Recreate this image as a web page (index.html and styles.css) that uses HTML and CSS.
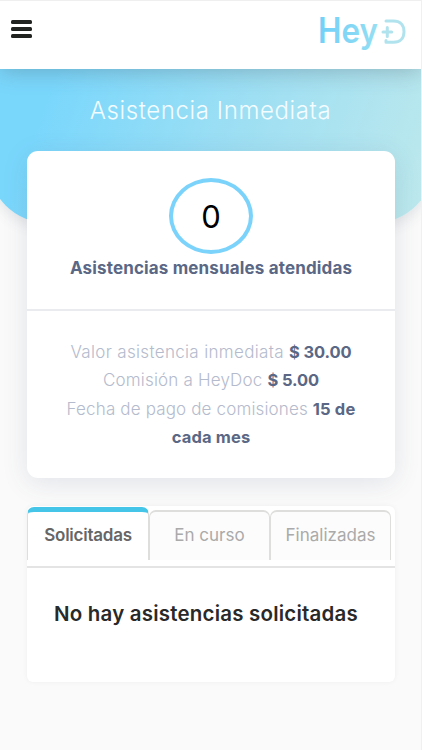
FILE: index.html
```html
<!DOCTYPE html>
<html lang="es">
<head>
<meta charset="utf-8">
<meta name="viewport" content="width=device-width, initial-scale=1">
<title>HeyDoc</title>
<link rel="stylesheet" href="styles.css">
</head>
<body>
<header class="topbar">
  <button class="menu" aria-label="Menú"><span></span><span></span><span></span></button>
  <svg class="logo" width="90" height="50" viewBox="0 0 90 50" aria-label="Hey D">
    <defs><linearGradient id="brand" gradientUnits="userSpaceOnUse" x1="0" y1="0" x2="90" y2="0"><stop stop-color="#72d0f8"/><stop offset=".55" stop-color="#8edcf4"/><stop offset="1" stop-color="#bce6ea"/></linearGradient></defs>
    <text class="logo-text" x="-1" y="30.500" textLength="60" lengthAdjust="spacingAndGlyphs">Hey</text>
    <path class="logo-mark" d="M67 9H74.500C81 9 85 13 85 19.700S81 30.300 74.500 30.300H67V28.500M64 20H72.700M68.300 15.600V24.400"/>
  </svg>
</header>
<main>
  <section class="hero"><div class="hero-bg"></div><h1><span>Asistencia Inmediata</span></h1></section>
  <section class="summary">
    <div class="summary-top">
      <div class="count">0</div>
      <h2>Asistencias mensuales atendidas</h2>
    </div>
    <div class="details">
      <p class="rate">Valor asistencia inmediata <b>$ 30.00</b></p>
      <p class="fee">Comisión a HeyDoc <b>$ 5.00</b></p>
      <p class="date">Fecha de pago de comisiones <b>15 de<br>cada mes</b></p>
    </div>
  </section>
  <section class="requests">
    <nav class="tabs">
      <a class="tab active">Solicitadas</a>
      <a class="tab">En curso</a>
      <a class="tab">Finalizadas</a>
    </nav>
    <div class="empty">No hay asistencias solicitadas</div>
  </section>
</main>
</body>
</html>
```
FILE: styles.css
```css
* { box-sizing: border-box; }
body {
  margin: 0;
  height: 750px;
  overflow: hidden;
  background: #fafafa;
  border-right: 1px solid #f0f0f0;
  font-family: Inter, "Open Sans", sans-serif;
}
h1, h2, p { margin: 0; }
.topbar {
  position: relative;
  z-index: 3;
  height: 69px;
  display: flex;
  justify-content: space-between;
  align-items: flex-start;
  padding: 12px 12px 0 11px;
  background: #fff;
  border-top: 1px solid #efefef;
  box-shadow: 0 3px 20px rgba(70, 80, 90, .3);
}
.menu {
  display: flex;
  flex-direction: column;
  gap: 3px;
  width: 21px;
  margin-top: 7px;
  padding: 0;
  border: 0;
  background: none;
}
.menu span { width: 21px; height: 4px; border-radius: 1.5px; background: #20231f; }
.logo { margin-top: -1px; overflow: visible; }
.logo-text { font: 600 35px Inter, sans-serif; fill: url(#brand); }
.logo-mark { fill: none; stroke: #b1e3ee; stroke-width: 3; stroke-linecap: round; stroke-linejoin: round; }
.hero { position: relative; height: 82px; }
.hero-bg {
  position: absolute;
  z-index: -1;
  top: 0;
  left: -12px;
  right: -13px;
  height: 154px;
  border-radius: 0 0 60px 60px;
  background: linear-gradient(110deg, #7ad7fc 14%, #9edff3 55%, #bfe9ec);
  box-shadow: 0 5px 14px rgba(60, 70, 90, .12);
}
h1 {
  padding-top: 27px;
  color: #f3fcff;
  font-size: 24px;
  line-height: 30px;
  font-weight: 300;
  text-align: center;
  letter-spacing: .6px;
}
.summary {
  width: 368px;
  height: 327px;
  margin-left: 27px;
  border-radius: 11px;
  background: #fff;
  color: #5a6785;
  box-shadow: 0 5px 26px rgba(60, 75, 115, .13);
}
.summary-top {
  display: flex;
  flex-direction: column;
  align-items: center;
  height: 160px;
  padding-top: 27px;
  border-bottom: 2px solid #e9ebef;
}
.count {
  display: grid;
  place-items: center;
  width: 84px;
  height: 76px;
  border: 4px solid #7bd3fb;
  border-radius: 50%;
  color: #000;
  font-size: 31px;
}
h2 { font-size: 17px; line-height: 29px; font-weight: 700; letter-spacing: .15px; white-space: nowrap; }
.details {
  padding-top: 27px;
  color: #b4bbcd;
  font-size: 17px;
  font-weight: 300;
  line-height: 28.400px;
  text-align: center;
  white-space: nowrap;
}
.details b { color: #5a6785; font-size: 16.500px; font-weight: 700; letter-spacing: -.1px; }
.rate { letter-spacing: .33px; }
.fee { letter-spacing: .18px; }
.date { letter-spacing: .15px; }
.details .date b { letter-spacing: .15px; }
.requests {
  width: 368px;
  height: 176px;
  margin: 28px 0 0 27px;
  border-radius: 6px;
  background: #fff;
  box-shadow: 0 0 5px rgba(0, 0, 0, .05);
}
.tabs {
  display: flex;
  align-items: flex-start;
  height: 62px;
  padding-top: 4px;
  border-bottom: 2px solid #e4e4e4;
}
.tab {
  flex: none;
  width: 121px;
  height: 50px;
  border: solid #dededc;
  border-width: 2px 1px 0 1px;
  border-radius: 7px 7px 0 0;
  background: #fcfcfc;
  color: #aaa;
  font-size: 17px;
  line-height: 46px;
  text-align: center;
}
.tab.active {
  width: 122px;
  height: 53px;
  margin-top: -3px;
  border-top: 5px solid #45c5e8;
  background: #fff;
  color: #666;
  font-weight: 600;
  letter-spacing: -.25px;
}
.empty {
  padding: 31px 10px 0 0;
  color: #292929;
  font-size: 20.500px;
  font-weight: 600;
  line-height: 30px;
  letter-spacing: .2px;
  text-align: center;
  white-space: nowrap;
}
```
